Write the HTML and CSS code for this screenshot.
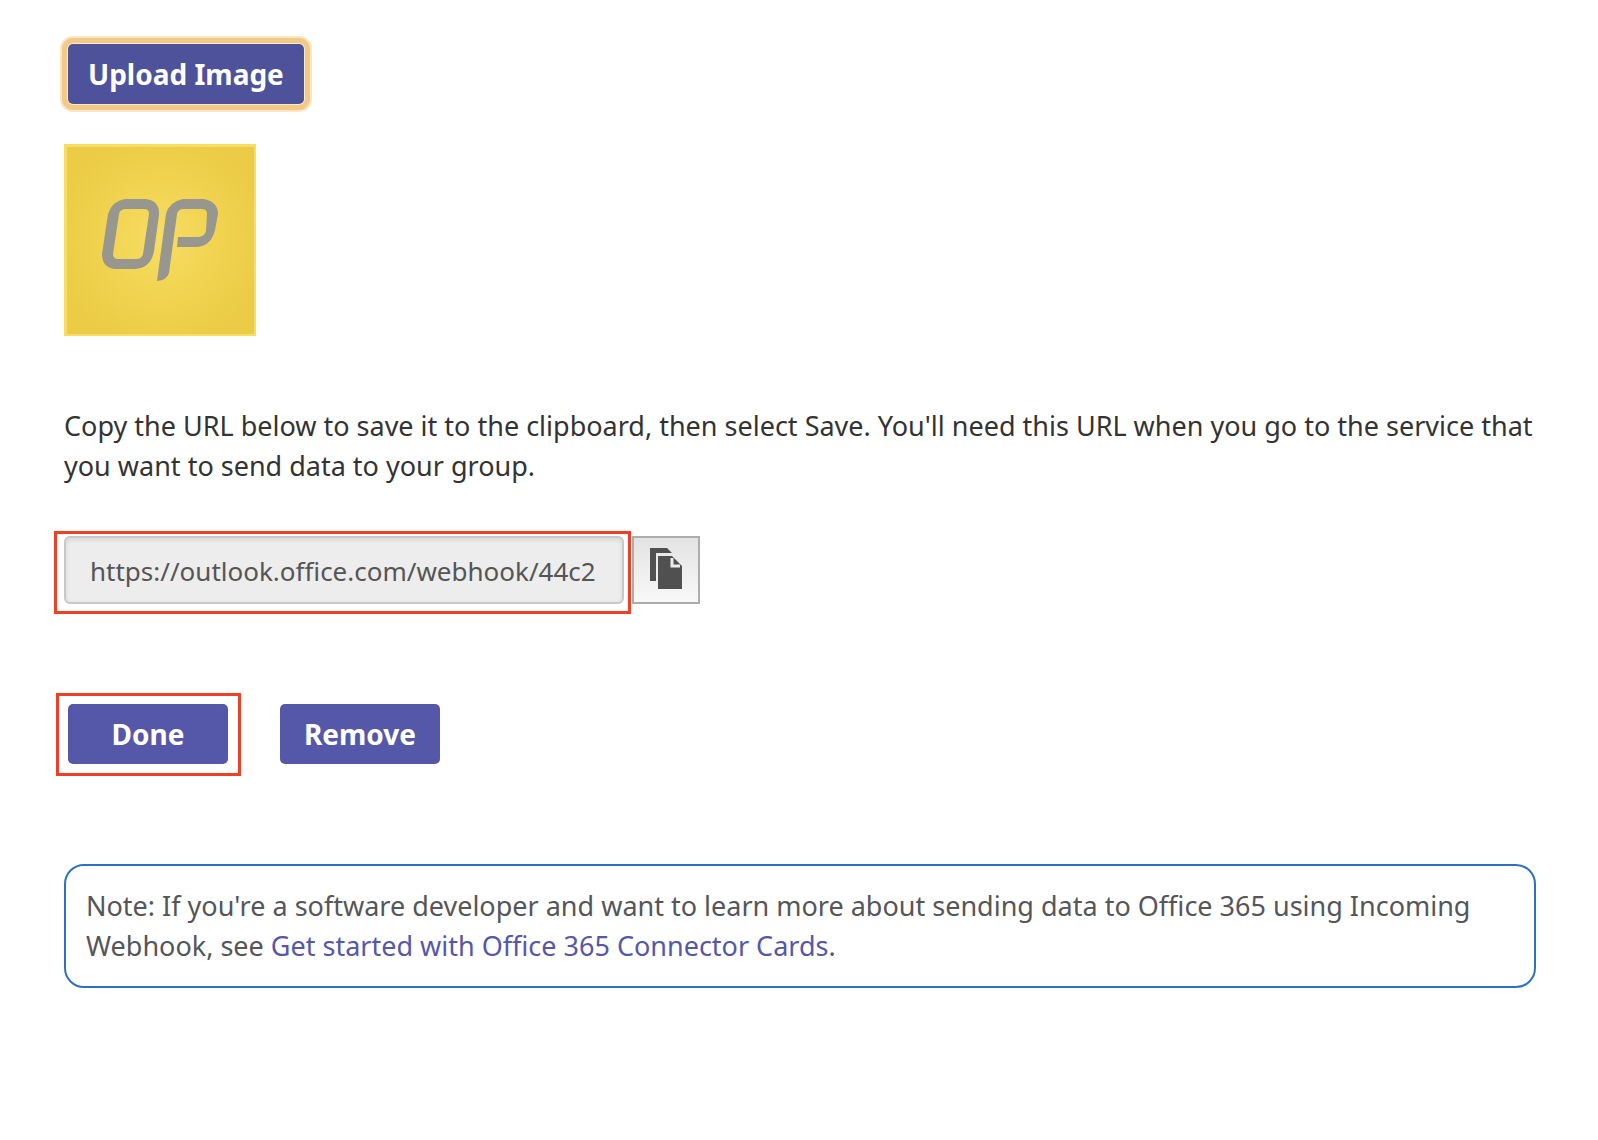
FILE: index.html
```html
<!DOCTYPE html>
<html lang="en">
<head>
    <meta charset="UTF-8">
    <meta name="viewport" content="width=device-width, initial-scale=1.0">
    <title>Incoming Webhook</title>
    <link rel="stylesheet" href="styles.css">
</head>
<body>
    <main class="connector">
        <button type="button" class="btn btn-upload">Upload Image</button>

        <svg class="logo" viewBox="0 0 192 192" role="img" aria-label="OP logo">
            <defs>
                <radialGradient id="logoBg" cx="50%" cy="50%" r="56%">
                    <stop offset="0" stop-color="#f7dd64"/>
                    <stop offset="0.5" stop-color="#f1d451"/>
                    <stop offset="1" stop-color="#eccc46"/>
                </radialGradient>
            </defs>
            <rect width="192" height="192" fill="#f7dd60"/>
            <rect x="3" y="3" width="187" height="187" fill="url(#logoBg)"/>
            <g fill="#97968f">
                <path fill-rule="evenodd" d="M61 55H82Q96 57 95 71L90 107Q87 124 71 125H50Q38 123 38 110L44 70Q48 57 61 55ZM62 65Q56 65 55 70L49 110Q49 115 54 115H72Q78 115 79 110L85 70Q85 65 80 65Z"/>
                <path d="M119 55H140Q154 58 154 70L151 86Q147 102 133 103H113L114 93H135Q141 92 142 87L143 70Q143 65 138 65H120Q114 65 113 70L105 129Q103 136 93 137L102 70Q105 58 119 55Z"/>
            </g>
        </svg>

        <label class="description" for="webhookUrl">Copy the URL below to save it to the clipboard, then select Save. You'll need this URL when you go to the service that you want to send data to your group.</label>

        <div class="url-row">
            <div class="highlight highlight-url">
                <input type="text" id="webhookUrl" class="url-input" value="https://outlook.office.com/webhook/44c2" readonly>
            </div>
            <button type="button" class="copy-btn" id="copyBtn" aria-label="Copy URL">
                <svg width="32" height="42" viewBox="0 0 32 42" fill="#505050">
                    <path d="M0 0H17L22 5H6V33H0Z"/>
                    <path d="M8 8H22L32 18V41H8Z"/>
                    <path d="M22 10V18H30" fill="none" stroke="#ececec" stroke-width="3"/>
                </svg>
            </button>
        </div>

        <div class="actions">
            <div class="highlight highlight-done">
                <button type="button" class="btn">Done</button>
            </div>
            <button type="button" class="btn">Remove</button>
        </div>

        <p class="note">Note: If you're a software developer and want to learn more about sending data to Office 365 using Incoming Webhook, see <a href="#">Get started with Office 365 Connector Cards</a>.</p>
    </main>
</body>
</html>
```
FILE: styles.css
```css
:root {
    --purple: #5558a8;
    --red: #ee4026;
}

* {
    box-sizing: border-box;
}

body {
    margin: 0;
    background: #fff;
    color: #333;
    font-family: Tahoma, "Noto Sans", sans-serif;
    font-size: 27px;
    line-height: 40px;
}

.connector {
    display: flex;
    flex-direction: column;
    align-items: flex-start;
    padding: 44px 62px 40px 64px;
}

.btn {
    min-width: 160px;
    height: 60px;
    padding: 0 20px;
    border: none;
    border-radius: 5px;
    background: var(--purple);
    color: #fff;
    font: inherit;
    font-size: 28px;
    font-weight: bold;
    cursor: pointer;
}
.btn-upload {
    margin-left: 4px;
    background: #4e529b;
    box-shadow: 0 0 0 1px #fae8cb, 0 0 0 6px #f2ca86, 0 0 0 8px #f9e6c9;
}

.logo {
    width: 192px;
    height: 192px;
    margin-top: 40px;
}

.description {
    margin-top: 70px;
}

.url-row {
    display: flex;
    gap: 8px;
    margin-top: 50px;
}
.url-input {
    display: block;
    width: 560px;
    height: 68px;
    padding: 2px 24px 0;
    border: 2px solid #c8c8c8;
    border-radius: 6px;
    background: #ededed;
    box-shadow: inset 0 2px 4px rgba(0, 0, 0, 0.1);
    color: #555;
    font: inherit;
    font-size: 26px;
}
.copy-btn {
    display: flex;
    justify-content: center;
    width: 68px;
    height: 68px;
    padding: 10px 0 0;
    border: 2px solid #adadad;
    background: linear-gradient(#e3e3e3, #f8f8f8);
    cursor: pointer;
}

/* red frames around the steps to follow */
.highlight {
    position: relative;
}
.highlight::after {
    content: "";
    position: absolute;
    border: 3px solid var(--red);
    pointer-events: none;
}
.highlight-url::after {
    inset: -5px -7px -10px -10px;
}
.highlight-done::after {
    inset: -11px -13px -12px -12px;
}

.actions {
    display: flex;
    gap: 52px;
    margin-top: 100px;
    padding-left: 4px;
}

.note {
    align-self: stretch;
    margin: 100px 0 0;
    padding: 20px;
    border: 2px solid #2e70c1;
    border-radius: 20px;
    color: #55565a;
}
.note a {
    color: var(--purple);
    text-decoration: none;
}
```
